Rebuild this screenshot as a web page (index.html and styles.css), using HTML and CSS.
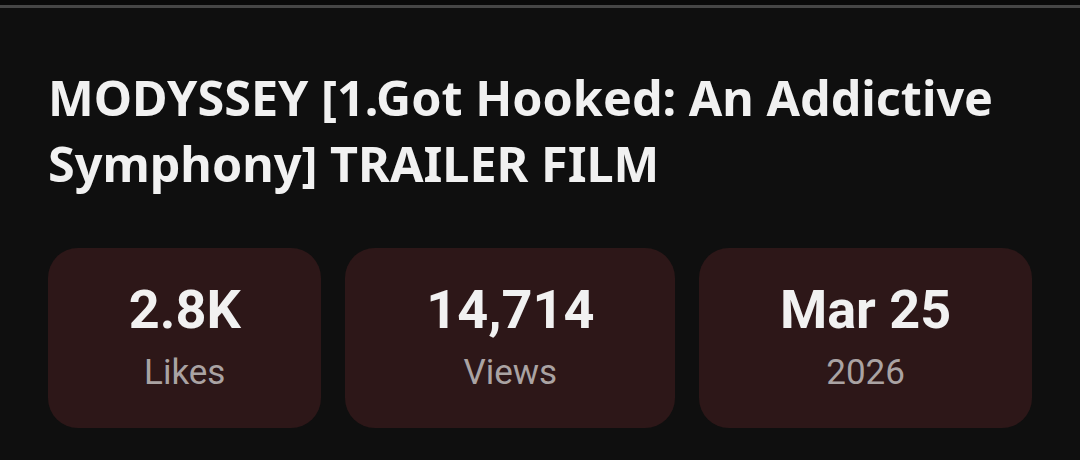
FILE: index.html
```html
<!DOCTYPE html>
<html>
<head>
<meta charset="utf-8">
<link rel="stylesheet" href="styles.css">
</head>
<body>
<div class="topbar"><div class="topbar-line"></div></div>
<main class="content">
  <h1 class="title">MODYSSEY [1.Got Hooked: An Addictive Symphony] TRAILER FILM</h1>
  <div class="stats">
    <div class="stat">
      <div class="stat-value">2.8K</div>
      <div class="stat-label">Likes</div>
    </div>
    <div class="stat">
      <div class="stat-value">14,714</div>
      <div class="stat-label">Views</div>
    </div>
    <div class="stat">
      <div class="stat-value">Mar 25</div>
      <div class="stat-label">2026</div>
    </div>
  </div>
</main>
</body>
</html>
```
FILE: styles.css
```css
html, body {
  margin: 0;
  padding: 0;
  background: #0f0f0f;
  width: 1080px;
  height: 460px;
  overflow: hidden;
}
.topbar {
  height: 5px;
  background: #0a0a0a;
}
.topbar-line {
  position: relative;
  top: 5px;
  height: 3px;
  background: #464646;
}
.content {
  padding: 59px 48px 0 48px;
}
.title {
  margin: 0;
  font-family: "Noto Sans", sans-serif;
  font-weight: 700;
  font-size: 48.5px;
  line-height: 66px;
  color: #f1f1f1;
  letter-spacing: 0;
}
.stats {
  display: flex;
  gap: 24px;
  margin-top: 52px;
}
.stat {
  flex: 1 1 auto;
  background: #2d1718;
  border-radius: 30px;
  height: 180px;
  box-sizing: border-box;
  padding-top: 30px;
  display: flex;
  flex-direction: column;
  align-items: center;
  font-family: Roboto, sans-serif;
}
.stat-value {
  font-weight: 700;
  font-size: 54px;
  line-height: 64px;
  color: #f1f1f1;
}
.stat-label {
  margin-top: 10px;
  font-size: 35px;
  line-height: 42px;
  color: #aaa3a3;
}
```
